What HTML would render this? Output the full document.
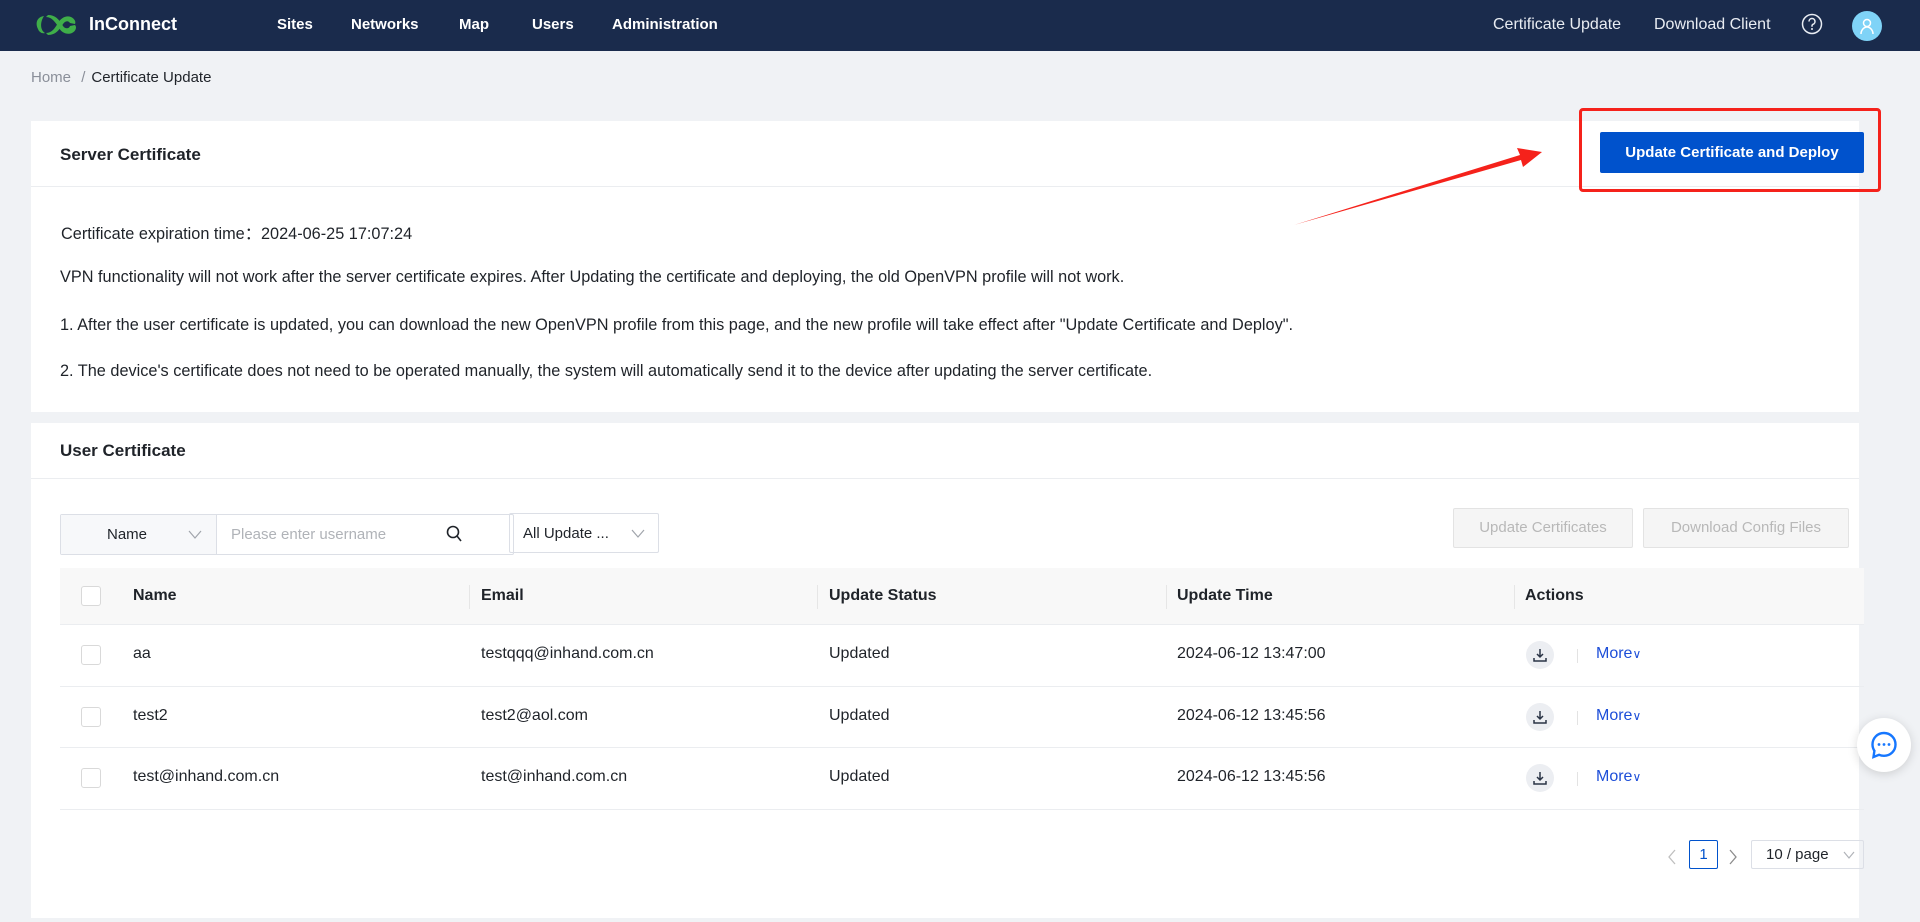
<!DOCTYPE html>
<html><head><meta charset="utf-8"><style>
*{box-sizing:border-box;margin:0;padding:0}
body{width:1920px;height:922px;overflow:hidden;background:#f0f2f5;font-family:"Liberation Sans",sans-serif;color:#1f2329;position:relative}
.hdr{position:absolute;left:0;top:0;width:1920px;height:51px;background:#1a2b4c;color:#fff}
.hdr .t{position:absolute;top:16px;font-size:15px;font-weight:bold;white-space:nowrap}
.hdr .r{position:absolute;top:16px;font-size:16px;color:#e8ecf2;white-space:nowrap}
.abs{position:absolute;white-space:nowrap}
.card{position:absolute;left:31px;width:1828px;background:#fff}
.txt{font-size:16.3px;color:#1f2329}
.th{font-size:16px;font-weight:bold;color:#1f2329}
.td{font-size:16px;color:#1f2329}
.cb{position:absolute;width:20px;height:20px;border:1px solid #d9d9d9;border-radius:3px;background:#fff}
.dl{position:absolute;width:28px;height:28px;border-radius:50%;background:#eceef2}
.more{font-size:16px;color:#1d4ed8}
</style></head><body>
<div class="hdr">
  <svg style="position:absolute;left:34px;top:13px" width="44" height="24" viewBox="0 0 44 24">
    <path d="M10 3 C3 4 1 10 4 16 C5 19 8 21 11 20 C6 17 6 9 10 3Z" fill="#3fae49"/>
    <path d="M12 4 C18 4 22 10 25 15 C28 20 33 22 38 20 C42 18 43 14 41 12 L36 13 C35 16 31 16 29 13 C25 6 21 2 14 2Z" fill="#3fae49"/>
    <path d="M12 20 C18 20 21 15 24 10 C27 5 32 2 37 4 C41 6 42 9 41 11 L36 10 C34 7 31 8 29 11 C26 16 22 22 14 22Z" fill="#3fae49"/>
  </svg>
  <div class="t" style="left:89px;font-size:18px;top:14px">InConnect</div>
  <div class="t" style="left:277px">Sites</div>
  <div class="t" style="left:351px">Networks</div>
  <div class="t" style="left:459px">Map</div>
  <div class="t" style="left:532px">Users</div>
  <div class="t" style="left:612px">Administration</div>
  <div class="r" style="left:1493px">Certificate Update</div>
  <div class="r" style="left:1654px">Download Client</div>
  <svg style="position:absolute;left:1801px;top:13px" width="22" height="22" viewBox="0 0 22 22"><circle cx="11" cy="11" r="9.5" fill="none" stroke="#e8ecf2" stroke-width="1.5"/><path d="M8 8.5a3 3 0 1 1 4 2.8c-.8.4-1 .9-1 1.7v.8" fill="none" stroke="#e8ecf2" stroke-width="1.5"/><circle cx="11" cy="16" r="1" fill="#e8ecf2"/></svg>
  <div class="abs" style="left:1852px;top:11px;width:30px;height:30px;border-radius:50%;background:#7fd3f7"></div>
  <svg style="position:absolute;left:1858px;top:17px" width="18" height="18" viewBox="0 0 18 18"><circle cx="9" cy="6" r="3.5" fill="none" stroke="#fff" stroke-width="1.5"/><path d="M3 17c0-4 3-7 6-7s6 3 6 7" fill="none" stroke="#fff" stroke-width="1.5"/></svg>
</div>

<div class="abs" style="left:31px;top:69px;font-size:15px;color:#8a8f99">Home <span style="margin:0 6px">/</span><span style="color:#1f2329">Certificate Update</span></div>

<div class="card" style="top:121px;height:291px">
  <div class="abs" style="left:29px;top:24px;font-size:17px;font-weight:bold">Server Certificate</div>
  <div class="abs" style="left:0;top:65px;width:1828px;height:1px;background:#ebedf0"></div>
  <div class="abs txt" style="left:30px;top:99px">Certificate expiration time：2024-06-25 17:07:24</div>
  <div class="abs txt" style="left:29px;top:147px">VPN functionality will not work after the server certificate expires. After Updating the certificate and deploying, the old OpenVPN profile will not work.</div>
  <div class="abs txt" style="left:29px;top:195px">1. After the user certificate is updated, you can download the new OpenVPN profile from this page, and the new profile will take effect after "Update Certificate and Deploy".</div>
  <div class="abs txt" style="left:29px;top:241px">2. The device's certificate does not need to be operated manually, the system will automatically send it to the device after updating the server certificate.</div>
  <div class="abs" style="left:1569px;top:11px;width:264px;height:41px;background:#0052cc;border-radius:2px;color:#fff;font-size:15px;font-weight:bold;text-align:center;line-height:41px">Update Certificate and Deploy</div>
</div>
<div class="abs" style="left:1579px;top:108px;width:302px;height:84px;border:3px solid #f5221b;border-radius:4px"></div>
<svg class="abs" style="left:0;top:0" width="1920" height="922"><polygon points="1294,225 1520,155 1517,148 1542,152 1523,167 1521,160" fill="#f5221b"/></svg>

<div class="card" style="top:423px;height:495px">
  <div class="abs" style="left:29px;top:18px;font-size:17px;font-weight:bold">User Certificate</div>
  <div class="abs" style="left:0;top:55px;width:1828px;height:1px;background:#ebedf0"></div>
  <div class="abs" style="left:29px;top:91px;width:454px;height:41px;border:1px solid #dcdfe6;border-radius:2px"></div>
  <div class="abs" style="left:30px;top:92px;width:156px;height:39px;background:#f7f8fa;border-right:1px solid #dcdfe6"></div>
  <div class="abs" style="left:76px;top:103px;font-size:15px">Name</div>
  <svg class="abs" style="left:157px;top:107px" width="14" height="10"><path d="M1 1l6 7 6-7" fill="none" stroke="#a0a4ab" stroke-width="1.2"/></svg>
  <div class="abs" style="left:200px;top:103px;font-size:15px;color:#b0b3b8">Please enter username</div>
  <svg class="abs" style="left:415px;top:102px" width="16" height="18"><circle cx="7" cy="7" r="5.5" fill="none" stroke="#1f2329" stroke-width="1.6"/><path d="M11 11l4 5" stroke="#1f2329" stroke-width="1.6"/></svg>
  <div class="abs" style="left:478px;top:90px;width:150px;height:40px;border:1px solid #dcdfe6;border-radius:2px"></div>
  <div class="abs" style="left:492px;top:102px;font-size:15px">All Update ...</div>
  <svg class="abs" style="left:600px;top:106px" width="14" height="10"><path d="M1 1l6 7 6-7" fill="none" stroke="#a0a4ab" stroke-width="1.2"/></svg>
  <div class="abs" style="left:1422px;top:85px;width:180px;height:40px;background:#f5f5f5;border:1px solid #e3e3e3;border-radius:2px;color:#b8b8b8;font-size:15px;text-align:center;line-height:38px">Update Certificates</div>
  <div class="abs" style="left:1612px;top:85px;width:206px;height:40px;background:#f5f5f5;border:1px solid #e3e3e3;border-radius:2px;color:#b8b8b8;font-size:15px;text-align:center;line-height:38px">Download Config Files</div>

  <div class="abs" style="left:29px;top:145px;width:1804px;height:57px;background:#f8f8f8;border-bottom:1px solid #ebedf0"></div>
  <div class="cb" style="left:50px;top:163px"></div>
  <div class="abs th" style="left:102px;top:164px">Name</div>
  <div class="abs th" style="left:450px;top:164px">Email</div>
  <div class="abs th" style="left:798px;top:164px">Update Status</div>
  <div class="abs th" style="left:1146px;top:164px">Update Time</div>
  <div class="abs th" style="left:1494px;top:164px">Actions</div>
  <div class="abs" style="left:438px;top:162px;width:1px;height:24px;background:#e6e6e6"></div>
  <div class="abs" style="left:786px;top:162px;width:1px;height:24px;background:#e6e6e6"></div>
  <div class="abs" style="left:1135px;top:162px;width:1px;height:24px;background:#e6e6e6"></div>
  <div class="abs" style="left:1483px;top:162px;width:1px;height:24px;background:#e6e6e6"></div>

  <div class="abs" style="left:29px;top:263px;width:1804px;height:1px;background:#ebedf0"></div>
  <div class="abs" style="left:29px;top:324px;width:1804px;height:1px;background:#ebedf0"></div>
  <div class="abs" style="left:29px;top:386px;width:1804px;height:1px;background:#ebedf0"></div>

  <div class="cb" style="left:50px;top:222px"></div>
  <div class="abs td" style="left:102px;top:222px">aa</div>
  <div class="abs td" style="left:450px;top:222px">testqqq@inhand.com.cn</div>
  <div class="abs td" style="left:798px;top:222px">Updated</div>
  <div class="abs td" style="left:1146px;top:222px">2024-06-12 13:47:00</div>

  <div class="cb" style="left:50px;top:284px"></div>
  <div class="abs td" style="left:102px;top:284px">test2</div>
  <div class="abs td" style="left:450px;top:284px">test2@aol.com</div>
  <div class="abs td" style="left:798px;top:284px">Updated</div>
  <div class="abs td" style="left:1146px;top:284px">2024-06-12 13:45:56</div>

  <div class="cb" style="left:50px;top:345px"></div>
  <div class="abs td" style="left:102px;top:345px">test@inhand.com.cn</div>
  <div class="abs td" style="left:450px;top:345px">test@inhand.com.cn</div>
  <div class="abs td" style="left:798px;top:345px">Updated</div>
  <div class="abs td" style="left:1146px;top:345px">2024-06-12 13:45:56</div>

  <div class="dl" style="left:1495px;top:218px"></div>
  <div class="dl" style="left:1495px;top:280px"></div>
  <div class="dl" style="left:1495px;top:341px"></div>
  <svg class="abs" style="left:1502px;top:225px" width="14" height="14"><path d="M7 1v8M4 6l3 3 3-3M1 10v3h12v-3" fill="none" stroke="#2a3345" stroke-width="1.5"/></svg>
  <svg class="abs" style="left:1502px;top:287px" width="14" height="14"><path d="M7 1v8M4 6l3 3 3-3M1 10v3h12v-3" fill="none" stroke="#2a3345" stroke-width="1.5"/></svg>
  <svg class="abs" style="left:1502px;top:348px" width="14" height="14"><path d="M7 1v8M4 6l3 3 3-3M1 10v3h12v-3" fill="none" stroke="#2a3345" stroke-width="1.5"/></svg>
  <div class="abs" style="left:1546px;top:226px;width:1px;height:14px;background:#e3e3e3"></div>
  <div class="abs" style="left:1546px;top:288px;width:1px;height:14px;background:#e3e3e3"></div>
  <div class="abs" style="left:1546px;top:349px;width:1px;height:14px;background:#e3e3e3"></div>
  <div class="abs more" style="left:1565px;top:222px">More<span style="font-size:12px">&#8744;</span></div>
  <div class="abs more" style="left:1565px;top:284px">More<span style="font-size:12px">&#8744;</span></div>
  <div class="abs more" style="left:1565px;top:345px">More<span style="font-size:12px">&#8744;</span></div>

  <svg class="abs" style="left:1636px;top:426px" width="10" height="16"><path d="M8 1L2 8l6 7" fill="none" stroke="#bfbfbf" stroke-width="1.3"/></svg>
  <div class="abs" style="left:1658px;top:417px;width:29px;height:29px;border:1px solid #0052cc;border-radius:2px;color:#0052cc;font-size:15px;text-align:center;line-height:27px">1</div>
  <svg class="abs" style="left:1697px;top:426px" width="10" height="16"><path d="M2 1l6 7-6 7" fill="none" stroke="#8c8c8c" stroke-width="1.3"/></svg>
  <div class="abs" style="left:1720px;top:417px;width:113px;height:29px;border:1px solid #dcdfe6;border-radius:2px"></div>
  <div class="abs" style="left:1735px;top:423px;font-size:15px">10 / page</div>
  <svg class="abs" style="left:1812px;top:428px" width="12" height="9"><path d="M1 1l5 6 5-6" fill="none" stroke="#b0b3b8" stroke-width="1.2"/></svg>
</div>

<div class="abs" style="left:1857px;top:718px;width:54px;height:54px;border-radius:50%;background:#fff;box-shadow:0 2px 10px rgba(0,0,0,.15)"></div>
<svg class="abs" style="left:1869px;top:730px" width="30" height="30" viewBox="0 0 30 30"><path d="M15 3C8.5 3 3.5 8 3.5 14.5c0 2.4.7 4.5 1.9 6.3L4.5 27l5.6-2.2c1.5.7 3.1 1 4.9 1 6.5 0 11.5-5 11.5-11.3S21.5 3 15 3z" fill="none" stroke="#1677ff" stroke-width="2.4"/><circle cx="10" cy="14.5" r="1.4" fill="#1677ff"/><circle cx="15" cy="14.5" r="1.4" fill="#1677ff"/><circle cx="20" cy="14.5" r="1.4" fill="#1677ff"/></svg>
</body></html>
